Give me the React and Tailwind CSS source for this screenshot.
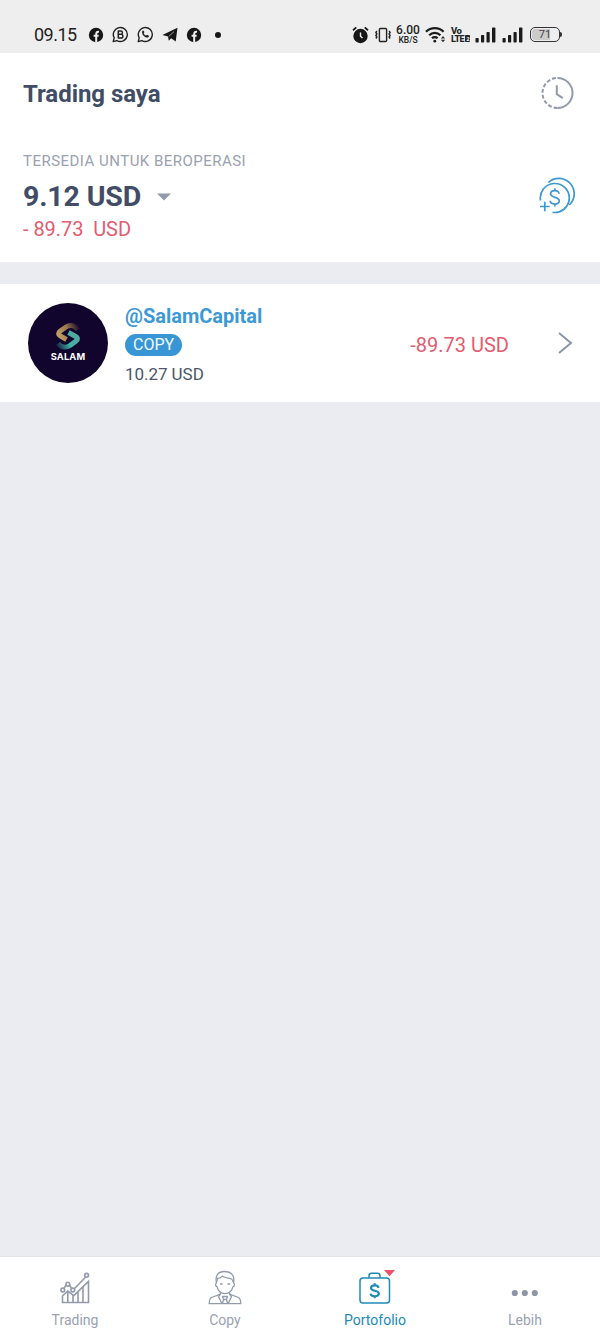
function FacebookIcon() {
  return (
    <svg width="16" height="16" viewBox="0 0 16 16">
      <circle cx="8" cy="8" r="7.2" fill="#171717" />
      <path d="M8.2 15.5V7.2c0-2 1-2.7 2.8-2.5M5.6 8.8h5" fill="none" stroke="#eee" strokeWidth="2" />
    </svg>
  )
}

function BubbleIcon({ children }) {
  return (
    <svg width="17" height="17" viewBox="0 0 17 17" fill="none" stroke="#222" strokeWidth="1.4" strokeLinejoin="round">
      <path d="M1.2 15.6l1-3.7a7 7 0 1 1 2.7 2.7z" />
      {children}
    </svg>
  )
}

function Signal() {
  return (
    <svg width="21" height="16" viewBox="0 0 21 16" fill="#1b1b1b">
      <rect x="0.5" y="11" width="3.2" height="4.5" rx="0.7" />
      <rect x="6" y="8" width="3.2" height="7.5" rx="0.7" />
      <rect x="11.5" y="5" width="3.2" height="10.5" rx="0.7" />
      <rect x="17" y="0.5" width="3.4" height="15" rx="0.7" />
    </svg>
  )
}

function StatusBar() {
  return (
    <div className="flex h-[53px] shrink-0 items-center bg-[#eeeeee] pt-[16px] pl-[34px] text-[#222]">
      <span className="w-[54px] text-[18px] leading-[20px] tracking-[-0.5px]">09.15</span>
      <div className="flex items-center gap-[8px]">
        <FacebookIcon />
        <BubbleIcon>
          <path d="M6.3 5h2.6c2 0 2 3.3 0 3.3H6.3zM6.3 8.3h2.9c2.2 0 2.2 3.7 0 3.7H6.3z" strokeWidth="1.5" />
        </BubbleIcon>
        <BubbleIcon>
          <path
            d="M5.2 5.2c.6-1 1.3-1 1.7-.2l.5 1.2-.7 1c.5 1.2 1.2 1.9 2.4 2.4l1-.8 1.4.7c.8.4.4 1.4-.4 1.9-2.7 1.2-6.9-3.2-5.9-6.2z"
            fill="#222"
            stroke="none"
          />
        </BubbleIcon>
        <svg width="16" height="15" viewBox="0 0 16 15" fill="#171717">
          <path d="M.4 8L15.5.8l-1.8 13.7-4.6-3.2-2.3 2.4-.8-4.3z" />
          <path d="M6.6 9.600l5.400-5" stroke="#eee" strokeWidth="0.6" />
        </svg>
        <FacebookIcon />
      </div>
      <span className="ml-[13px] size-[6px] rounded-full bg-[#171717]" />

      <svg className="ml-[131px]" width="17" height="18" viewBox="0 0 17 18">
        <circle cx="8.5" cy="10" r="7.2" fill="#171717" />
        <path d="M1 4.2L4.3 1.4M16 4.2l-3.3-2.8" stroke="#171717" strokeWidth="1.8" />
        <path d="M8.5 6.5v3.800l2 1.800" fill="none" stroke="#eee" strokeWidth="1.4" />
      </svg>
      <svg className="ml-[6px]" width="16" height="16" viewBox="0 0 16 16" fill="none" stroke="#222" strokeWidth="1.4">
        <rect x="4.4" y="1.5" width="7.2" height="13" rx="1" />
        <path d="M1.9 4l-1 1.5 1 1.5-1 1.5 1 1.5-1 1.5M14.1 4l1 1.5-1 1.5 1 1.5-1 1.5 1 1.5" />
      </svg>
      <div className="ml-[4px] flex w-[26px] flex-col items-center whitespace-nowrap">
        <span className="text-[12px] leading-[11px] font-medium">6.00</span>
        <span className="text-[8.5px] leading-[9px] font-medium">KB/S</span>
      </div>
      <svg className="ml-[4px]" width="22" height="18" viewBox="0 0 22 18" fill="none" stroke="#1b1b1b" strokeWidth="2.3">
        <path d="M1 5.8a12.5 12.5 0 0 1 17.6 0M4.2 9.2a8 8 0 0 1 11.2 0M7 12.3a4 4 0 0 1 5.6 0" />
        <circle cx="9.8" cy="15.2" r="1.4" fill="#1b1b1b" stroke="none" />
        <path d="M15.8 12.5l2.2-2.4 2.2 2.4zM15.8 13.8l2.2 2.4 2.2-2.4z" fill="#333" stroke="none" />
      </svg>
      <div className="ml-[4px] flex w-[20px] flex-col font-extrabold tracking-[-0.5px]">
        <span className="text-[9.5px] leading-[8px]">Vo</span>
        <span className="flex items-center text-[9px] leading-[8px]">
          LTE
          <span className="ml-[1px] h-[7px] w-[5px] rounded-[1px] bg-[#222] text-center text-[6px] leading-[7px] text-[#eee]">
            2
          </span>
        </span>
      </div>
      <div className="ml-[4px] flex gap-[6px]">
        <Signal />
        <Signal />
      </div>
      <div className="ml-[7px] flex h-[15px] w-[30px] items-center justify-center rounded-[5px] border-[1.5px] border-[#333] p-px">
        <span className="h-full w-full rounded-[3px] bg-linear-to-r from-[#cbcbcb] from-70% to-[#eee] to-70% text-center text-[11px] leading-[11px] text-[#444]">
          71
        </span>
      </div>
      <span className="h-[5px] w-[2px] rounded-r-sm bg-[#333]" />
    </div>
  )
}

function HistoryIcon() {
  return (
    <svg className="-mt-[2px] mr-px" width="34" height="34" viewBox="0 0 34 34" fill="none" stroke="#9299aa" strokeWidth="2">
      <path d="M17.500 2a15 15 0 0 1 0 30" />
      <path d="M17.500 32a15 15 0 0 1 0-30" strokeDasharray="3.9 2" />
      <path d="M16.800 9.300v8.800l6 4" />
    </svg>
  )
}

function DepositIcon() {
  return (
    <svg
      className="-mt-[2px]"
      width="38"
      height="37"
      viewBox="0 0 38 37"
      fill="none"
      stroke="#3c98d2"
      strokeWidth="1.7"
    >
      <path d="M3.5 23.5A14.5 14.5 0 1 1 15.5 35.3" />
      <path d="M11.3 5.5A15 15 0 1 1 32.3 28" />
      <path d="M3 29.500h9.600M7.800 24.700v9.600" />
      <path d="M22 16.800c-.3-4.400-8.400-4.200-8.400 0 0 4.600 8.700 2.500 8.700 7 0 4.500-9 4.300-9.100 0M17.900 11.200v2.500M17.900 27v2.500" />
    </svg>
  )
}

function Header() {
  return (
    <header className="flex h-[209px] shrink-0 flex-col bg-white pr-[25px] pl-[23px]">
      <div className="flex h-[81px] items-center justify-between">
        <h1 className="pt-px text-[24px] font-bold tracking-[-0.05px] text-[#414d66]">Trading saya</h1>
        <HistoryIcon />
      </div>
      <div className="flex items-center justify-between pt-[17px]">
        <div>
          <p className="text-[15px] leading-[20px] tracking-[0.48px] text-[#9aa1af]">TERSEDIA UNTUK BEROPERASI</p>
          <div className="mt-[9px] flex items-center gap-[16px]">
            <span className="text-[28.5px] leading-[34px] font-bold tracking-[-0.15px] text-[#414d66]">9.12 USD</span>
            <svg width="14" height="8" viewBox="0 0 14 8" fill="#929bab">
              <path d="M0 .5h14l-7 7z" />
            </svg>
          </div>
          <p className="mt-[3px] text-[20px] leading-[24px] tracking-[-0.05px] whitespace-pre text-[#e25c70]">
            {"- 89.73  USD"}
          </p>
        </div>
        <DepositIcon />
      </div>
    </header>
  )
}

function SalamLogo() {
  return (
    <div className="flex size-[80px] shrink-0 flex-col items-center rounded-full bg-[#12052d] pt-[18px]">
      <svg width="28" height="30" viewBox="0 0 28 30" fill="none" strokeWidth="5" strokeLinejoin="round">
        <defs>
          <linearGradient id="gold" gradientUnits="userSpaceOnUse" x1="3" y1="14" x2="24" y2="4">
            <stop offset="0" stopColor="#c5a168" />
            <stop offset="0.5" stopColor="#9d7850" />
            <stop offset="1" stopColor="#1c0b2e" />
          </linearGradient>
          <linearGradient id="teal" gradientUnits="userSpaceOnUse" x1="4" y1="27" x2="25" y2="16">
            <stop offset="0" stopColor="#1a1e42" />
            <stop offset="0.5" stopColor="#3bb3a5" />
            <stop offset="1" stopColor="#58a69f" />
          </linearGradient>
        </defs>
        <path d="M24 8.5c-3-4.5-8.5-5-12-2.5l-6 4.3c-2.2 1.7-1.7 3.4.3 4.6l6.2 3.6" stroke="url(#gold)" />
        <path d="M14.5 11.5l7.2 4c2.2 1.3 2.3 3 .4 4.500L16 24.500c-4 2.600-9 2-12-2" stroke="url(#teal)" />
      </svg>
      <span className="font-[Inter,sans-serif] text-[9.3px] leading-[12px] font-bold tracking-[0.2px] text-white">
        SALAM
      </span>
    </div>
  )
}

function Position() {
  return (
    <div className="mt-[22px] flex h-[118px] shrink-0 items-center bg-white pr-[27px] pl-[28px]">
      <SalamLogo />
      <div className="ml-[17px] flex flex-col items-start pt-px">
        <span className="text-[20px] leading-[24px] font-bold text-[#3c99d5]">@SalamCapital</span>
        <span className="mt-[6px] flex h-[22px] items-center rounded-full bg-[#3896d6] px-[8px] pt-px text-[16px] leading-[22px] text-[#f3faff]">
          COPY
        </span>
        <span className="mt-[8px] text-[17px] leading-[20px] tracking-[-0.05px] text-[#4b556c]">10.27 USD</span>
      </div>
      <span className="ml-auto pt-[3px] text-[20px] text-[#e25c70]">-89.73 USD</span>
      <svg className="ml-[49px]" width="15" height="24" viewBox="0 0 15 24" fill="none" stroke="#8993a5" strokeWidth="1.9">
        <path d="M1 2l12 10L1 22" />
      </svg>
    </div>
  )
}

function TradingIcon() {
  return (
    <svg width="30" height="32" viewBox="0 0 30 32" fill="none" stroke="#929bab" strokeWidth="1.6">
      <path d="M2.5 30.500V24l5.300-5 6 4.700L28.500 9.500v21z" />
      <path d="M7.8 19v11M13 23v7M18 20v10M23 15v15" />
      <path d="M4 16.300l2.300-3.600M9.200 12.700l2.300 3.600M14.300 16.800L25.500 5.200" />
      <circle cx="2.8" cy="18" r="1.9" />
      <circle cx="7.8" cy="12.2" r="1.9" />
      <circle cx="12.8" cy="18" r="1.9" />
      <circle cx="26.6" cy="3.3" r="1.9" />
    </svg>
  )
}

function TraderIcon() {
  return (
    <svg width="34" height="35" viewBox="0 0 34 35" fill="none" stroke="#929bab" strokeWidth="1.3" strokeLinejoin="round">
      <path d="M8.4 13C7 5.500 10 1.500 16.500 1.500S27 5.500 25.600 13c1.300 1 .9 3.200-.6 3.700-1 4.300-4.300 7-8 7s-7-2.700-8-7c-1.500-.5-1.900-2.700-.6-3.700z" />
      <path d="M8.5 12.500c.7-1.500 1-3 .9-4.200 2.200.1 4-.9 5-2.200 2.500 2.600 7.600 1.400 9.300 3 1 1 1.100 2.200 1.900 3.800" />
      <path d="M12 14h2.600M19.500 14h2.600" />
      <path d="M12.5 22.500v1.700L3.500 27.500c-1.700.8-2.200 3.500-2.300 6.200h31.600c-.1-2.700-.6-5.400-2.300-6.200l-9-3.300v-1.700" />
      <path d="M12.5 24l-2 2.500 3.300 7M21.500 24l2 2.500-3.300 7M14.500 26.500h5l-1 3h-3zM15.500 29.500l-1 4M18.500 29.500l1 4" />
    </svg>
  )
}

function PortfolioIcon() {
  return (
    <svg width="36" height="35" viewBox="0 0 36 35" fill="none" stroke="#218ab8" strokeWidth="1.5">
      <rect x="1" y="9" width="29.5" height="25" rx="3" />
      <path d="M10 9V6.800c0-1.600.8-2.500 2.500-2.500h6c1.700 0 2.500.9 2.500 2.500V9" />
      <path
        d="M19.5 18.800c-.4-3.400-7.500-3.200-7.500.2 0 3.600 7.800 2 7.800 5.600 0 3.500-7.700 3.500-8.200 0M15.700 14.300v2.500M15.700 26.800v2.500"
        strokeWidth="2.2"
      />
      <path d="M25 1h11l-5.500 6.200z" fill="#ec5368" stroke="none" />
    </svg>
  )
}

function MoreIcon() {
  return (
    <svg width="28" height="8" viewBox="0 0 28 8" fill="#8e95a5">
      <circle cx="3.8" cy="4" r="3.1" />
      <circle cx="13.8" cy="4" r="3.1" />
      <circle cx="23.8" cy="4" r="3.1" />
    </svg>
  )
}

const tabs = [
  { label: "Trading", icon: <TradingIcon />, iconClass: "pb-[2px]" },
  { label: "Copy", icon: <TraderIcon />, iconClass: "pb-px" },
  { label: "Portofolio", icon: <PortfolioIcon />, iconClass: "pl-[3px] pb-[2px]", active: true },
  { label: "Lebih", icon: <MoreIcon />, iconClass: "pb-[9px]" },
]

function TabBar() {
  return (
    <nav className="mt-auto grid h-[84px] shrink-0 grid-cols-4 border-t border-[#e2e3e8] bg-white">
      {tabs.map((tab) => (
        <button key={tab.label} className="flex flex-col items-center">
          <span className={`flex h-[49px] items-end ${tab.iconClass}`}>{tab.icon}</span>
          <span className={`mt-[4px] text-[14px] leading-[20px] ${tab.active ? "text-[#218ab8]" : "text-[#9aa2b0]"}`}>
            {tab.label}
          </span>
        </button>
      ))}
    </nav>
  )
}

export default function App() {
  return (
    <div className="flex h-[1340px] w-[600px] flex-col overflow-hidden bg-[#ebecf1] font-[Roboto,sans-serif]">
      <StatusBar />
      <Header />
      <Position />
      <TabBar />
    </div>
  )
}
